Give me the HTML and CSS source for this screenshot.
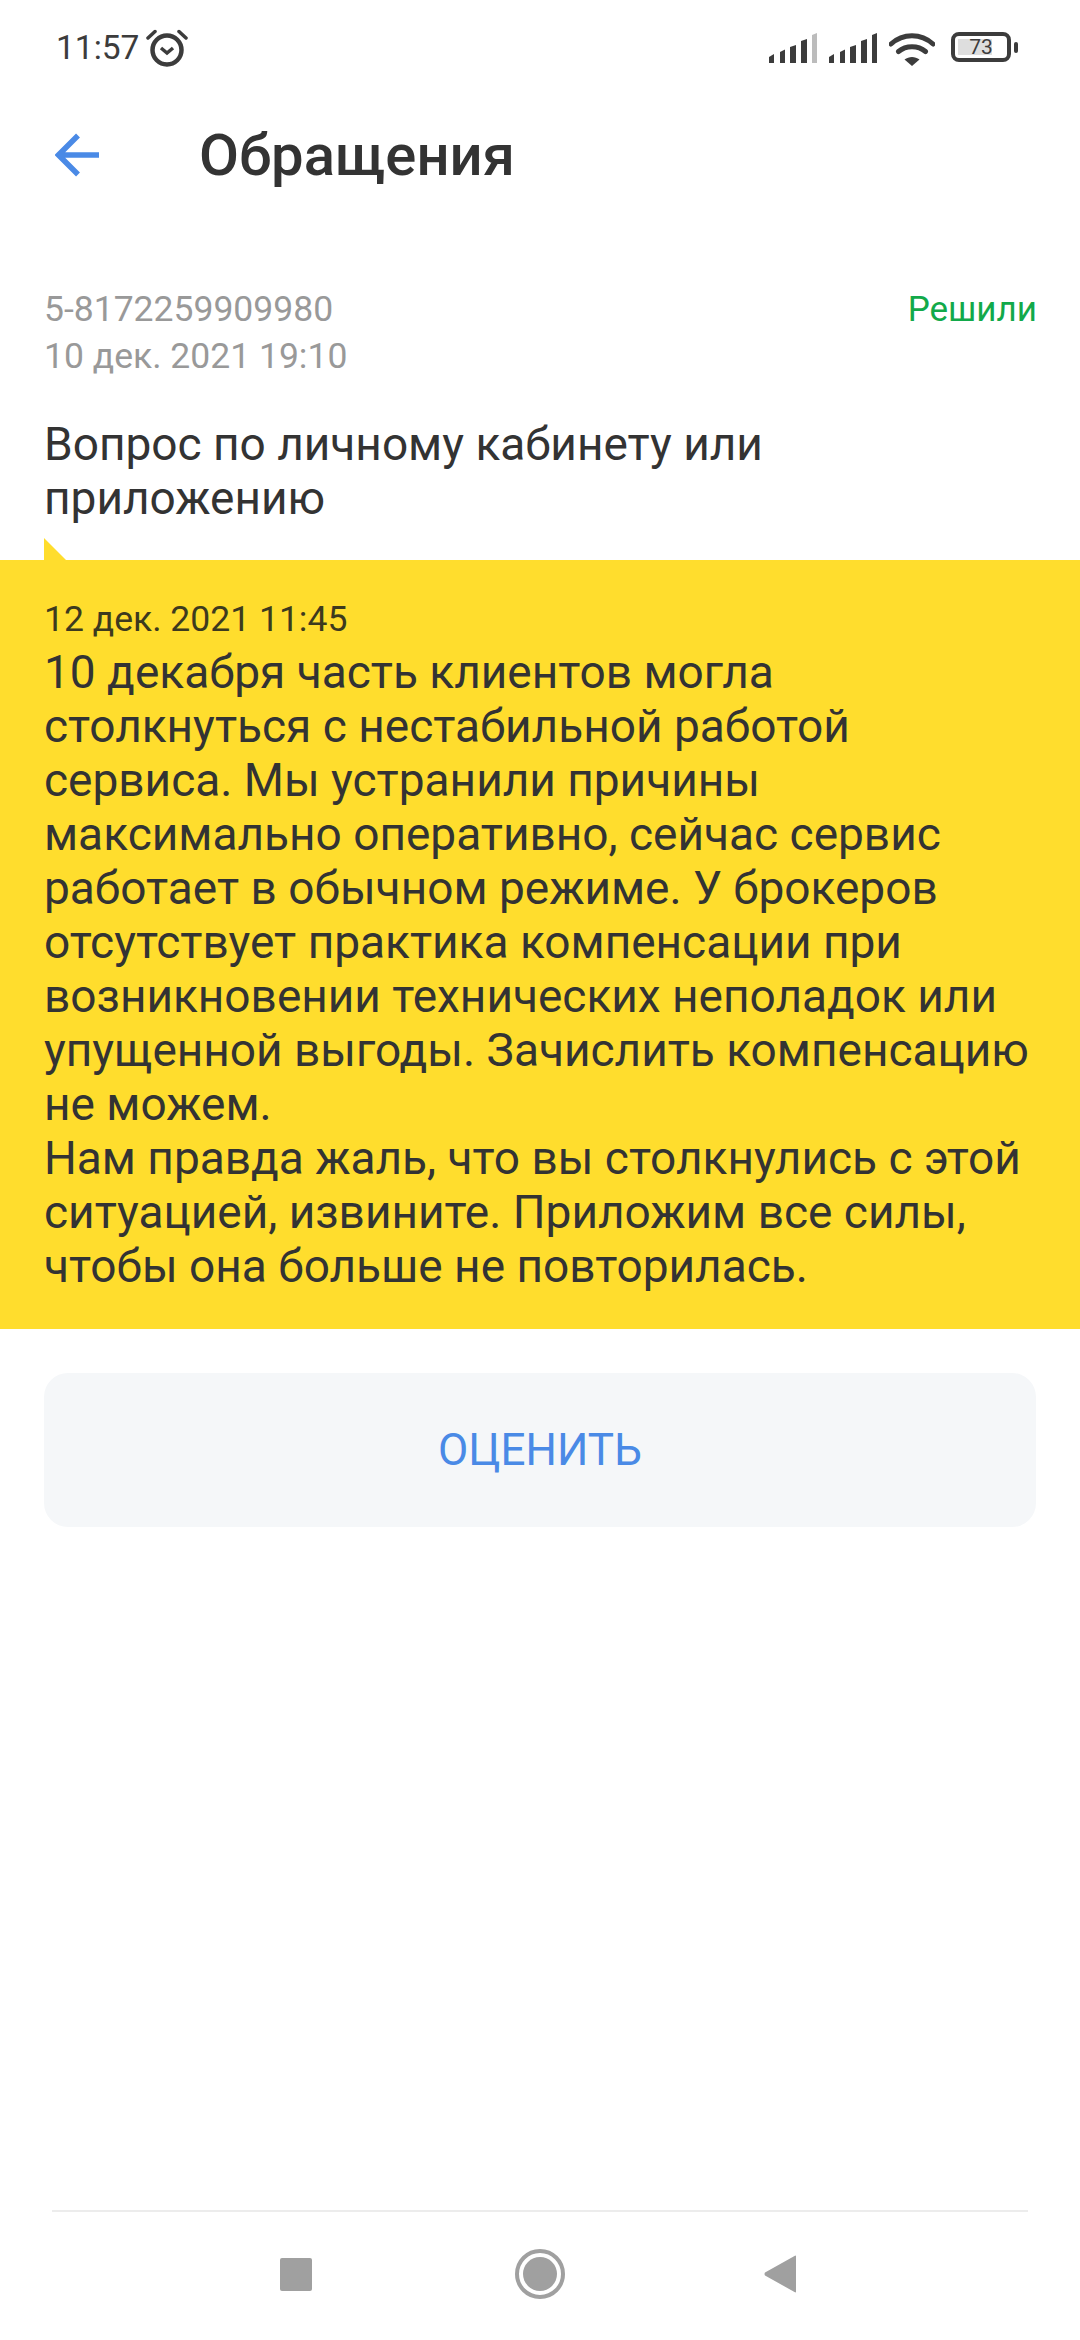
FILE: index.html
```html
<!DOCTYPE html>
<html>
<head>
    <title>Обращения</title>
    <link rel="stylesheet" href="styles.css">
</head>
<body>
    <div class="status-bar">
        <div class="status-left">
            <span class="clock">11:57</span>
            <svg class="alarm" width="42" height="38" viewBox="0 0 42 38">
                <circle cx="21" cy="21" r="14.5" fill="none" stroke="#3c3c3c" stroke-width="4.5"/>
                <path d="M15 19l6 5 6-5" fill="none" stroke="#3c3c3c" stroke-width="3.5"/>
                <path d="M2 9L9 2.500M40 9L33 2.500" fill="none" stroke="#3c3c3c" stroke-width="3.500" stroke-linecap="round"/>
            </svg>
        </div>
        <div class="status-right">
            <svg class="signal" width="48" height="30" viewBox="0 0 48 30">
                <path d="M0 24l5-3v9H0z" fill="#3c3c3c"/>
                <path d="M11 19l5-2.500V30h-5z" fill="#3c3c3c"/>
                <path d="M21 14l6-2v18h-6z" fill="#3c3c3c"/>
                <path d="M32 8l6-2v24h-6z" fill="#3c3c3c"/>
                <path d="M43 2l5-2v30h-5z" fill="#bcbcbc"/>
            </svg>
            <svg class="signal" width="48" height="30" viewBox="0 0 48 30">
                <path d="M0 24l5-3v9H0z" fill="#3c3c3c"/>
                <path d="M11 19l5-2.500V30h-5z" fill="#3c3c3c"/>
                <path d="M21 14l6-2v18h-6z" fill="#3c3c3c"/>
                <path d="M32 8l6-2v24h-6z" fill="#3c3c3c"/>
                <path d="M43 2l5-2v30h-5z" fill="#3c3c3c"/>
            </svg>
            <svg class="wifi" width="46" height="34" viewBox="0 0 46 34">
                <path d="M2 12C14 1 32 1 44 12M9.500 19.500C17 13 29 13 36.500 19.500" fill="none" stroke="#3c3c3c" stroke-width="5" stroke-linecap="round"/>
                <path d="M23 34l-7.500-6.500C20 24 26 24 30.500 27.500z" fill="#3c3c3c"/>
            </svg>
            <div class="battery">
                <div class="battery-body">
                    <div class="battery-fill"></div>
                    <span class="battery-text">73</span>
                </div>
                <div class="battery-nub"></div>
            </div>
        </div>
    </div>

    <div class="header">
        <svg class="back" width="44" height="44" viewBox="0 0 44 44">
            <path d="M44 22H4M23 2.500L3.500 22 23 41.500" fill="none" stroke="#4a8ae6" stroke-width="5.500"/>
        </svg>
        <h1 class="title">Обращения</h1>
    </div>

    <div class="ticket-meta">
        <div class="ticket-info">
            <div>5-8172259909980</div>
            <div>10 дек. 2021 19:10</div>
        </div>
        <div class="ticket-state">Решили</div>
    </div>

    <div class="ticket-subject">Вопрос по личному кабинету или приложению</div>

    <div class="answer">
        <div class="answer-date">12 дек. 2021 11:45</div>
        <div class="answer-text">10 декабря часть клиентов могла столкнуться с нестабильной работой сервиса. Мы устранили причины максимально оперативно, сейчас сервис работает в обычном режиме. У брокеров отсутствует практика компенсации при возникновении технических неполадок или упущенной выгоды. Зачислить компенсацию не можем.<br>Нам правда жаль, что вы столкнулись с этой ситуацией, извините. Приложим все силы, чтобы она больше не повторилась.</div>
    </div>

    <button class="rate" type="button">ОЦЕНИТЬ</button>

    <div class="nav-bar">
        <svg width="32" height="33" viewBox="0 0 32 33"><rect width="32" height="33" rx="2" fill="#a0a0a0"/></svg>
        <svg class="nav-home" width="50" height="50" viewBox="0 0 50 50">
            <circle cx="25" cy="25" r="23" fill="none" stroke="#a0a0a0" stroke-width="4"/>
            <circle cx="25" cy="25" r="17" fill="#a0a0a0"/>
        </svg>
        <svg width="32" height="38" viewBox="0 0 32 38"><path d="M32 1.500V36.500Q32 38 30.500 37L1 20.500Q0 19 1 17.500L30.500 1Q32 0 32 1.500z" fill="#a0a0a0"/></svg>
    </div>
</body>
</html>
```

FILE: styles.css
```css
* {
    box-sizing: border-box;
}
html, body {
    margin: 0;
    padding: 0;
}
body {
    width: 1080px;
    height: 2340px;
    position: relative;
    background: #fff;
    color: #333;
    font-family: Roboto, "Noto Sans", sans-serif;
    overflow: hidden;
}
.status-bar {
    height: 96px;
    padding: 28px 62px 0 56px;
    display: flex;
    justify-content: space-between;
    align-items: flex-start;
}
.status-left {
    display: flex;
    align-items: flex-start;
    color: #3c3c3c;
}
.clock {
    font-size: 33.500px;
    line-height: 40px;
}
.alarm {
    margin: 1px 0 0 7px;
}
.status-right {
    display: flex;
    align-items: flex-start;
    padding-top: 4px;
}
.signal {
    margin: 1px 12px 0 0;
}
.battery {
    display: flex;
    align-items: center;
    margin-left: 16px;
}
.battery-body {
    width: 60px;
    height: 30px;
    border: 4px solid #3c3c3c;
    border-radius: 8px;
    position: relative;
    display: flex;
    align-items: center;
    justify-content: center;
}
.battery-fill {
    position: absolute;
    left: 3px;
    top: 3px;
    bottom: 3px;
    width: 34px;
    background: #dedede;
}
.battery-text {
    position: relative;
    font-size: 21px;
    line-height: 22px;
    color: #3c3c3c;
}
.battery-nub {
    width: 4px;
    height: 11px;
    margin-left: 3px;
    border-radius: 2px;
    background: #3c3c3c;
}
.header {
    display: flex;
    align-items: center;
    height: 66px;
    padding-left: 55px;
    margin-top: 26px;
}
.title {
    margin: 0 0 0 100px;
    font-size: 58px;
    line-height: 66px;
    font-weight: 500;
    color: #333;
}
.ticket-meta {
    display: flex;
    justify-content: space-between;
    padding: 0 43px 0 44px;
    margin-top: 98px;
    font-size: 35.500px;
    line-height: 47px;
}
.ticket-info {
    color: #999;
}
.ticket-state {
    color: #12a94a;
    font-size: 35px;
}
.ticket-subject {
    padding: 0 44px;
    margin-top: 37px;
    font-size: 46px;
    line-height: 54px;
    color: #333;
}
.answer {
    position: relative;
    margin-top: 35px;
    padding: 37px 44px 36px;
    background: #ffdd2d;
}
.answer::before {
    content: "";
    position: absolute;
    left: 44px;
    top: -22px;
    border-left: 0 solid transparent;
    border-right: 22px solid transparent;
    border-bottom: 22px solid #ffdd2d;
}
.answer-date {
    font-size: 35.500px;
    line-height: 44px;
    color: #3d3a1e;
    margin-bottom: 4px;
}
.answer-text {
    font-size: 46px;
    line-height: 54px;
    color: #333;
}
.rate {
    display: block;
    width: 992px;
    height: 154px;
    margin: 44px 44px 0;
    border: 0;
    border-radius: 24px;
    background: #f5f7f9;
    color: #4a8ae6;
    font-family: Roboto, "Noto Sans", sans-serif;
    font-size: 44px;
}
.nav-bar {
    position: absolute;
    left: 52px;
    right: 52px;
    top: 2210px;
    height: 130px;
    border-top: 2px solid #ececec;
    padding: 0 232px 4px 228px;
    display: flex;
    justify-content: space-between;
    align-items: center;
}
.nav-home {
    margin-left: 4px;
}
```
